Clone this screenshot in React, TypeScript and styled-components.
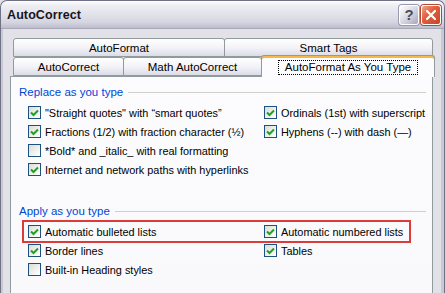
import styled, { createGlobalStyle } from 'styled-components';

const GlobalStyle = createGlobalStyle`
  html, body {
    margin: 0;
    padding: 0;
    background: #e2e1e8;
  }
  body {
    font-family: 'Liberation Sans', Arial, sans-serif;
    font-size: 11px;
    color: #000;
  }
`;

const Window = styled.div`
  width: 445px;
  height: 293px;
  box-sizing: border-box;
  display: flex;
  flex-direction: column;
  overflow: hidden;
  background: #e2e1e8;
  border-left: 1px solid #6f7184;
  border-right: 1px solid #6f7184;
  border-top: 1px solid #6f7184;
  border-radius: 7px 7px 0 0;
  box-shadow: inset 2px 0 0 #c9c9d6, inset -3px 0 0 #c9c9d6;
`;

const TitleBar = styled.div`
  height: 27px;
  flex: none;
  display: flex;
  align-items: center;
  padding: 0 3px 0 6px;
  border-radius: 6px 6px 0 0;
  background: linear-gradient(
    to bottom,
    #ffffff 0%,
    #eeeef4 15%,
    #e2e2ea 50%,
    #d4d4e0 80%,
    #bdbdcc 100%
  );
  border-bottom: 1px solid #a8a8b8;
`;

const Title = styled.div`
  flex: 1;
  font-family: 'Liberation Sans', Arial, sans-serif;
  font-weight: bold;
  font-size: 12.5px;
  color: #15151f;
  letter-spacing: 0.1px;
`;

const CaptionButton = styled.div<{ danger?: boolean }>`
  width: 20px;
  height: 20px;
  margin-left: 2px;
  box-sizing: border-box;
  border: 1px solid #fff;
  border-radius: 3px;
  display: flex;
  align-items: center;
  justify-content: center;
  font-family: 'Liberation Sans', Arial, sans-serif;
  font-weight: bold;
  font-size: 15px;
  color: ${({ danger }) => (danger ? '#fff' : '#4b4b60')};
  background: ${({ danger }) =>
    danger
      ? 'linear-gradient(135deg, #f1a48e 0%, #e0603f 40%, #c8442a 100%)'
      : 'linear-gradient(135deg, #ffffff 0%, #d4d4e0 55%, #a6a6ba 100%)'};
  box-shadow: 0 0 0 1px ${({ danger }) => (danger ? '#b24a3a' : '#9a9aae')};
`;

const Body = styled.div`
  flex: 1;
  padding: 9px 11px 0 9px;
  display: flex;
  flex-direction: column;
`;

const TabRow = styled.div<{ front?: boolean }>`
  display: flex;
  align-items: flex-end;
  height: 19px;
  padding: 0 ${({ front }) => (front ? '0' : '1px')} 0 3px;
  position: relative;
  z-index: ${({ front }) => (front ? 2 : 1)};
`;

const Tab = styled.div<{ width: number; selected?: boolean }>`
  width: ${({ width }) => width}px;
  height: ${({ selected }) => (selected ? 22 : 19)}px;
  box-sizing: border-box;
  flex: none;
  display: flex;
  align-items: center;
  justify-content: center;
  border: 1px solid #919b9c;
  border-bottom: ${({ selected }) => (selected ? 'none' : '1px solid #919b9c')};
  border-radius: 3px 3px 0 0;
  margin-right: -1px;
  font-size: 11.5px;
  color: #000;
  background: ${({ selected }) =>
    selected
      ? '#fcfcfe'
      : 'linear-gradient(to bottom, #ffffff 0%, #f3f3f8 50%, #dcdce8 100%)'};
  box-shadow: ${({ selected }) =>
    selected ? 'inset 0 2px 0 #f5b84a, inset 0 1px 0 #e6952a' : 'none'};
  margin-bottom: ${({ selected }) => (selected ? '-1px' : '0')};
  padding-top: ${({ selected }) => (selected ? '1px' : '0')};
`;

const FocusLabel = styled.span`
  outline: 1px dotted #000;
  padding: 0 6px;
  line-height: 13px;
`;

const Panel = styled.div`
  flex: 1;
  background: linear-gradient(to bottom, #fcfcfe 0%, #f9f9fb 100%);
  border: 1px solid #919b9c;
  border-bottom: none;
  padding: 8px 6px 0 8px;
  display: flex;
  flex-direction: column;
`;

const Group = styled.div`
  display: flex;
  flex-direction: column;
  margin-bottom: 25px;
`;

const Legend = styled.div`
  display: flex;
  align-items: center;
  gap: 5px;
  height: 14px;
  font-size: 11.5px;
  color: #0046d5;
  margin-bottom: 4px;

  &::after {
    content: '';
    flex: 1;
    height: 1px;
    background: #d0d0c8;
  }
`;

const Grid = styled.div`
  display: grid;
  grid-template-columns: 236px auto;
  padding-left: 9px;
`;

const Highlight = styled.div`
  grid-column: 1 / -1;
  display: grid;
  grid-template-columns: 236px auto;
  justify-self: start;
  border: 2px solid #dd3a3a;
  margin: -2px 0 -2px -6px;
  padding: 0 6px 0 4px;
`;

const Option = styled.label`
  display: flex;
  align-items: center;
  height: 19px;
  gap: 4px;
  white-space: nowrap;
  font-size: 10.9px;
`;

const Box = styled.span`
  width: 13px;
  height: 13px;
  box-sizing: border-box;
  flex: none;
  border: 1px solid #1c5180;
  background: linear-gradient(135deg, #dcdcd7 0%, #f2f2ee 60%, #ffffff 100%);
  display: flex;
  align-items: center;
  justify-content: center;
`;

function Check({ on }: { on: boolean }) {
  return (
    <Box>
      {on && (
        <svg width="9" height="8" viewBox="0 0 9 8">
          <path
            d="M1 3.5 L3.5 6 L8 1.5"
            fill="none"
            stroke="#21a121"
            strokeWidth="2"
          />
        </svg>
      )}
    </Box>
  );
}

type Item = { label: string; on: boolean };

function OptionItem({ label, on }: Item) {
  return (
    <Option>
      <Check on={on} />
      {label}
    </Option>
  );
}

const replaceItems: Item[] = [
  { label: '"Straight quotes" with \u201Csmart quotes\u201D', on: true },
  { label: 'Ordinals (1st) with superscript', on: true },
  { label: 'Fractions (1/2) with fraction character (\u00BD)', on: true },
  { label: 'Hyphens (--) with dash (\u2014)', on: true },
  { label: '*Bold* and _italic_ with real formatting', on: false },
  { label: '', on: false },
  { label: 'Internet and network paths with hyperlinks', on: true }
];

export default function App() {
  return (
    <>
      <GlobalStyle />
      <Window>
        <TitleBar>
          <Title>AutoCorrect</Title>
          <CaptionButton>?</CaptionButton>
          <CaptionButton danger>
            <svg width="12" height="12" viewBox="0 0 12 12">
              <path
                d="M2 2 L10 10 M10 2 L2 10"
                stroke="#fff"
                strokeWidth="2.2"
                strokeLinecap="round"
              />
            </svg>
          </CaptionButton>
        </TitleBar>
        <Body>
          <TabRow>
            <Tab width={212}>AutoFormat</Tab>
            <Tab width={209}>Smart Tags</Tab>
          </TabRow>
          <TabRow front>
            <Tab width={111}>AutoCorrect</Tab>
            <Tab width={139}>Math AutoCorrect</Tab>
            <Tab width={174} selected>
              <FocusLabel>AutoFormat As You Type</FocusLabel>
            </Tab>
          </TabRow>
          <Panel>
            <Group>
              <Legend>Replace as you type</Legend>
              <Grid>
                {replaceItems.map((item, i) =>
                  item.label ? (
                    <OptionItem key={i} {...item} />
                  ) : (
                    <div key={i} />
                  )
                )}
              </Grid>
            </Group>
            <Group>
              <Legend>Apply as you type</Legend>
              <Grid>
                <Highlight>
                  <OptionItem label="Automatic bulleted lists" on />
                  <OptionItem label="Automatic numbered lists" on />
                </Highlight>
                <OptionItem label="Border lines" on />
                <OptionItem label="Tables" on />
                <OptionItem label="Built-in Heading styles" on={false} />
              </Grid>
            </Group>
          </Panel>
        </Body>
      </Window>
    </>
  );
}
